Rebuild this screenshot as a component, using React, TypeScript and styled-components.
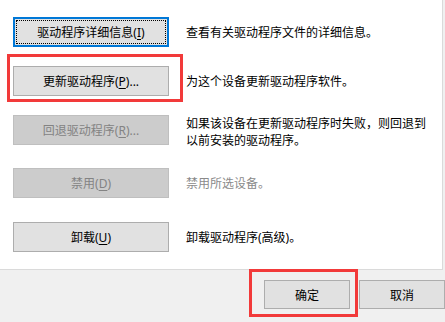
import React from 'react'
import styled, { createGlobalStyle } from 'styled-components'

const GlobalStyle = createGlobalStyle`
  html, body {
    margin: 0;
    padding: 0;
    background: #f0f0f0;
  }
  body {
    font-family: "Noto Sans", "Noto Sans CJK SC", sans-serif;
    font-size: 12px;
    color: #000;
  }
`

interface Action {
  label: string
  key: string
  tail?: string
  desc: string[]
  height: number
  disabled?: boolean
  dimDesc?: boolean
  focused?: boolean
  highlight?: boolean
}

const actions: Action[] = [
  { label: '驱动程序详细信息', key: 'I', desc: ['查看有关驱动程序文件的详细信息。'], height: 49, focused: true },
  { label: '更新驱动程序', key: 'P', tail: '...', desc: ['为这个设备更新驱动程序软件。'], height: 49, highlight: true },
  {
    label: '回退驱动程序',
    key: 'R',
    tail: '...',
    desc: ['如果该设备在更新驱动程序时失败，则回退到', '以前安装的驱动程序。'],
    height: 53,
    disabled: true,
  },
  { label: '禁用', key: 'D', desc: ['禁用所选设备。'], height: 54, disabled: true, dimDesc: true },
  { label: '卸载', key: 'U', desc: ['卸载驱动程序(高级)。'], height: 30 },
]

export default function App() {
  return (
    <>
      <GlobalStyle />
      <Window>
        <Panel>
          {actions.map((a) => (
            <Row key={a.key} $h={a.height}>
              <ButtonSlot>
                <SideButton disabled={a.disabled} $focused={a.focused}>
                  {a.label}(<u>{a.key}</u>){a.tail}
                </SideButton>
                {a.highlight && <Highlight $t={-12} $l={-6} $r={-14} $b={-6} />}
              </ButtonSlot>
              <Desc $dim={a.dimDesc} $multi={a.desc.length > 1}>
                {a.desc.map((line) => (
                  <span key={line}>{line}</span>
                ))}
              </Desc>
            </Row>
          ))}
        </Panel>
        <Footer>
          <ButtonSlot>
            <DialogButton>确定</DialogButton>
            <Highlight $t={-11} $l={-15} $r={-8} $b={-8} />
          </ButtonSlot>
          <DialogButton>取消</DialogButton>
        </Footer>
      </Window>
    </>
  )
}

const Window = styled.div`
  width: 445px;
  height: 322px;
  display: flex;
  flex-direction: column;
  overflow: hidden;
  background: #f0f0f0;
`

const Panel = styled.div`
  width: 443px;
  height: 270px;
  box-sizing: border-box;
  margin-right: 2px;
  background: #fff;
  border-right: 1px solid #dadada;
  border-bottom: 1px solid #dadada;
  padding: 17px 0 0 13px;
  display: flex;
  flex-direction: column;
`

const Row = styled.div<{ $h: number }>`
  height: ${(p) => p.$h}px;
  flex-shrink: 0;
  display: flex;
  align-items: flex-start;
  gap: 17px;
`

const ButtonSlot = styled.div`
  position: relative;
  display: flex;
`

const SideButton = styled.button<{ $focused?: boolean }>`
  position: relative;
  width: 156px;
  height: 30px;
  box-sizing: border-box;
  padding: 0;
  font-family: inherit;
  font-size: 12px;
  color: #000;
  background: #e1e1e1;
  border: ${(p) => (p.$focused ? '2px solid #0078d7' : '1px solid #adadad')};
  &:disabled {
    color: #838383;
    background: #cccccc;
    border-color: #bfbfbf;
  }
  u {
    text-underline-offset: 2px;
  }
  ${(p) =>
    p.$focused &&
    `
    &::after {
      content: '';
      position: absolute;
      inset: 1px;
      border: 1px dotted #000;
    }
  `}
`

const Desc = styled.div<{ $dim?: boolean; $multi?: boolean }>`
  display: flex;
  flex-direction: column;
  justify-content: ${(p) => (p.$multi ? 'flex-start' : 'center')};
  min-height: 30px;
  line-height: 17px;
  color: ${(p) => (p.$dim ? '#8a8a8a' : '#000')};
  white-space: nowrap;
`

const Footer = styled.div`
  flex: 1;
  display: flex;
  justify-content: flex-end;
  align-items: flex-start;
  gap: 9px;
  padding-top: 10px;
`

const DialogButton = styled.button`
  width: 86px;
  height: 29px;
  box-sizing: border-box;
  font-family: inherit;
  font-size: 12px;
  color: #000;
  background: #e1e1e1;
  border: 1px solid #adadad;
  padding: 0;
`

const Highlight = styled.div<{ $t: number; $l: number; $r: number; $b: number }>`
  position: absolute;
  top: ${(p) => p.$t}px;
  left: ${(p) => p.$l}px;
  right: ${(p) => p.$r}px;
  bottom: ${(p) => p.$b}px;
  border: 3px solid #f23a3a;
  pointer-events: none;
`
